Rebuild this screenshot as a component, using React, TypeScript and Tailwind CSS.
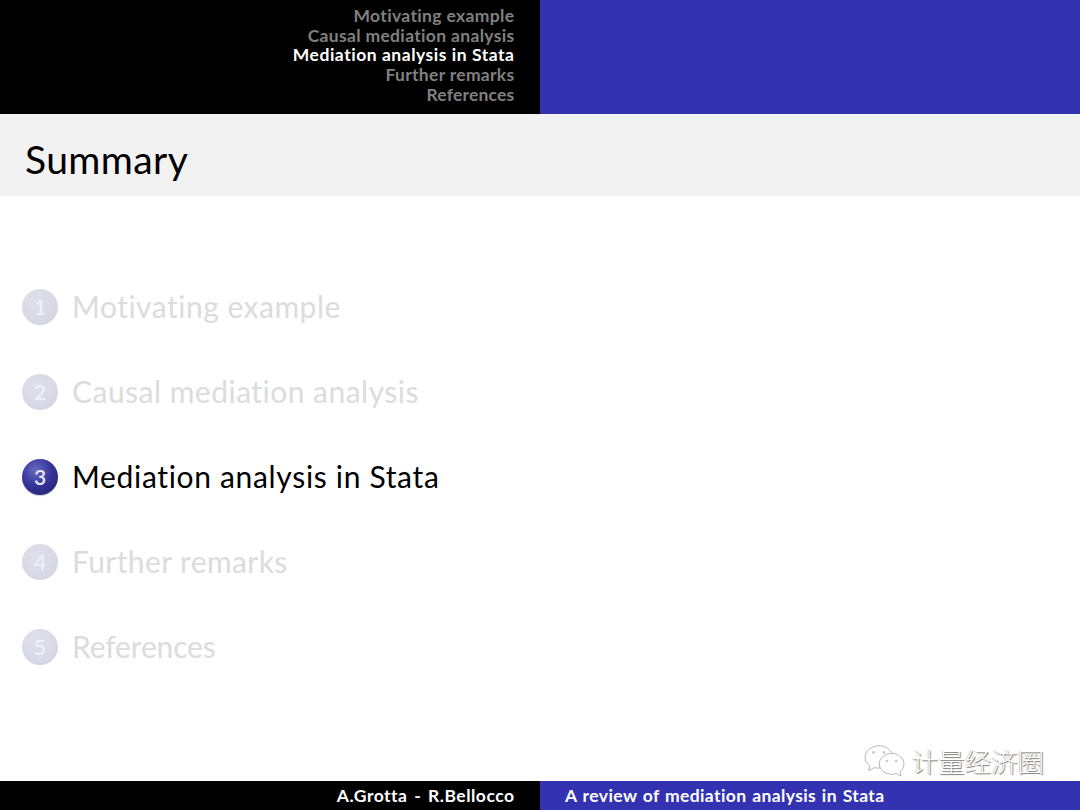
const sections = [
  { n: "1", label: "Motivating example", active: false, track: "tracking-[0.5px]", head: "tracking-[0.35px]" },
  { n: "2", label: "Causal mediation analysis", active: false, track: "tracking-[0.48px]", head: "tracking-[0.33px]" },
  { n: "3", label: "Mediation analysis in Stata", active: true, track: "tracking-[0.67px]", head: "tracking-[0.53px]" },
  { n: "4", label: "Further remarks", active: false, track: "tracking-[0.4px]", head: "tracking-[0.3px]" },
  { n: "5", label: "References", active: false, track: "tracking-[-0.15px]", head: "tracking-[0.2px]" },
];

function Ball({ n, active }: { n: string; active: boolean }) {
  return (
    <div
      className={
        active
          ? "flex h-[36px] w-[36px] shrink-0 items-center justify-center rounded-full bg-[radial-gradient(circle_at_38%_30%,#6a6ac0_0%,#36369c_45%,#1c1c60_100%)] text-[21px] font-semibold text-[#e8e8f4] shadow-[0_1px_1px_#c8c8d0]"
          : "flex h-[36px] w-[36px] shrink-0 items-center justify-center rounded-full bg-[radial-gradient(circle_at_38%_30%,#e0e0ec_0%,#d8d8e6_60%,#d0d0e0_100%)] text-[21px] font-semibold text-[#f0f0f8]"
      }
    >
      {n}
    </div>
  );
}

function Watermark() {
  return (
    <div className="absolute bottom-[31px] right-[36px] flex items-center gap-[7px]">
      <svg width="42" height="36" viewBox="0 0 44 38" fill="#ffffff" stroke="#b4b4b4" strokeWidth="1">
        <path d="M17 3C9 3 2 8 2 15c0 4 2 7 5 9l-1 5 6-3c2 .5 4 .6 6 .4-1-8 5-14 13-14C29 7 24 3 17 3z" />
        <path d="M30 11c-7 0-13 5-13 11s6 11 13 11c2 0 3 0 5-1l5 3-1-5c3-2 4-5 4-8 0-6-6-11-13-11z" />
        <circle cx="11" cy="10" r="1.5" fill="#c8c8c8" stroke="none" />
        <circle cx="22" cy="10" r="1.5" fill="#c8c8c8" stroke="none" />
        <circle cx="25" cy="19" r="1.4" fill="#c8c8c8" stroke="none" />
        <circle cx="35" cy="19" r="1.4" fill="#c8c8c8" stroke="none" />
      </svg>
      <span className="font-['Noto_Sans_CJK_SC',sans-serif] text-[26.5px] font-light leading-none text-white [text-shadow:1px_1px_1px_#777,-0.5px_-0.5px_0.5px_#aaa]">
        计量经济圈
      </span>
    </div>
  );
}

export default function App() {
  return (
    <div className="relative flex h-[810px] w-[1080px] flex-col overflow-hidden bg-white font-['Lato','Noto_Sans',sans-serif]">
      <header className="flex h-[114px] shrink-0">
        <div className="flex w-[540px] flex-col items-end bg-black pr-[25.5px] pt-[6px] text-[17.5px] font-bold leading-[19.7px] text-[#808080]">
          {sections.map((s) => (
            <div key={s.n} className={s.active ? `text-white ${s.head}` : s.head}>{s.label}</div>
          ))}
        </div>
        <div className="w-[540px] bg-[#3333b2]" />
      </header>
      <div className="flex h-[82px] shrink-0 items-center bg-[#f2f2f2] pl-[25px] pt-[8px] text-[39px] tracking-[0.4px] text-black">
        Summary
      </div>
      <main className="flex flex-1 flex-col gap-[49px] pl-[22px] pt-[93px]">
        {sections.map((s) => (
          <div key={s.n} className="flex h-[36px] items-center gap-[14px]">
            <Ball n={s.n} active={s.active} />
            <span className={s.active ? `pb-[2px] text-[30px] text-black ${s.track}` : `pb-[2px] text-[30px] text-[#dcdcdc] ${s.track}`}>
              {s.label}
            </span>
          </div>
        ))}
      </main>
      <footer className="flex h-[29px] shrink-0 text-[17.5px] font-bold text-white">
        <div className="flex w-[540px] items-center justify-end bg-black pr-[25.5px] pt-[1px] tracking-[0.5px] [word-spacing:2px]">A.Grotta - R.Bellocco</div>
        <div className="flex w-[540px] items-center bg-[#3333b2] pl-[25px] pt-[1px] tracking-[0.4px] [word-spacing:1px]">A review of mediation analysis in Stata</div>
      </footer>
      <Watermark />
    </div>
  );
}
